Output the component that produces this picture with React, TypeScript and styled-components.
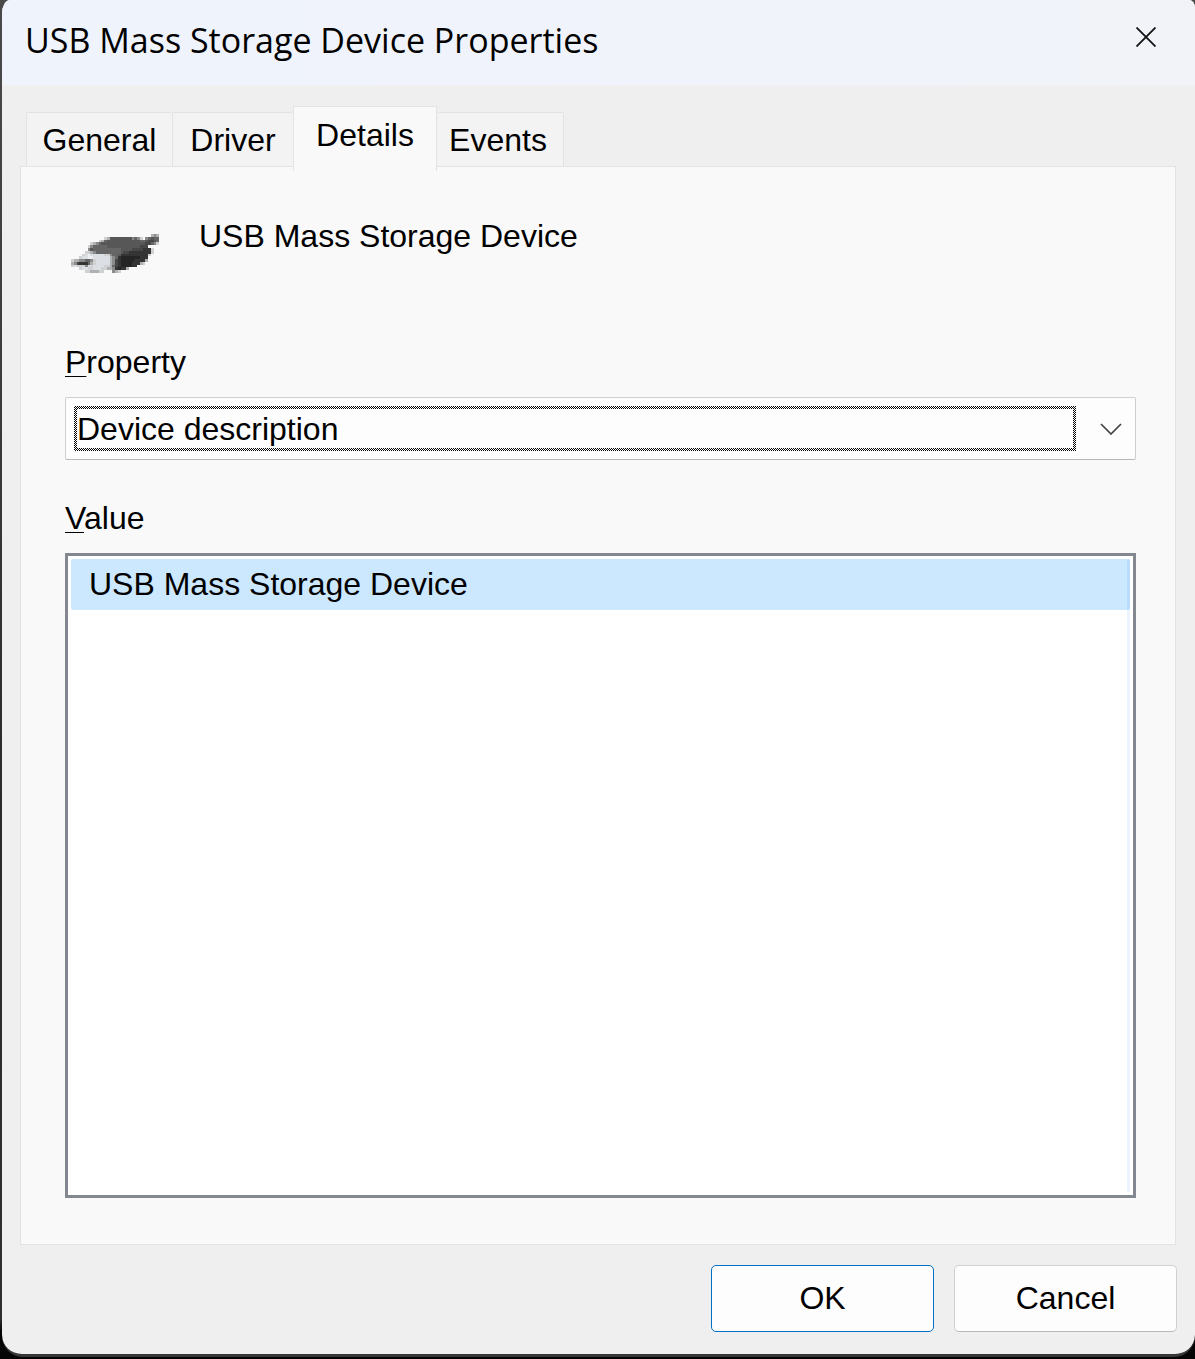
import React from "react";
import styled, { createGlobalStyle } from "styled-components";

const GlobalStyle = createGlobalStyle`
  *, *::before, *::after { box-sizing: border-box; }
  body {
    margin: 0;
    background: #0c0c0c;
    color: #000;
    font-family: "Liberation Sans", Arial, sans-serif;
    font-size: 32px;
    line-height: 40px;
  }
  button, select { font: inherit; color: inherit; }
`;

const Desktop = styled.div`
  display: flex;
  min-height: 100vh;
  padding: 0 0 2px 2px;
  background: linear-gradient(#4a4a4a, #2a2a2a 60%, #303030 97%, #050505 98%);
`;

const Dialog = styled.main`
  flex: 1;
  min-width: 0;
  display: flex;
  flex-direction: column;
  background: #efefef;
  border-bottom: 3px solid #363838;
  border-radius: 8px 6px 20px 20px / 14px 8px 22px 22px;
  overflow: hidden;
`;

const TitleBar = styled.header`
  display: flex;
  justify-content: space-between;
  align-items: flex-start;
  height: 85px;
  padding: 16px 24px 0 23px;
  background: linear-gradient(90deg, #eff3fc, #f1f3f9);
`;

const Title = styled.h1`
  margin: 0;
  font-family: "Open Sans", "Noto Sans", sans-serif;
  font-size: 34px;
  line-height: 48px;
  font-weight: 400;
  white-space: nowrap;
`;

const CloseButton = styled.button`
  display: grid;
  place-items: center;
  width: 50px;
  height: 42px;
  padding: 0;
  border: 0;
  background: transparent;
`;

const Content = styled.div`
  flex: 1;
  display: flex;
  flex-direction: column;
  padding: 21px 18px 22px;
`;

const TabList = styled.div`
  display: flex;
  align-items: flex-end;
  height: 60px;
  padding-left: 6px;
`;

const Tab = styled.button<{ $active?: boolean; $width: number }>`
  flex: none;
  width: ${(p) => p.$width}px;
  height: ${(p) => (p.$active ? 65 : 54)}px;
  margin-bottom: ${(p) => (p.$active ? -5 : 0)}px;
  padding: ${(p) => (p.$active ? "0 0 9px" : "0")};
  border: 1px solid #e3e3e3;
  border-right-width: ${(p) => (p.$active ? 1 : 0)}px;
  border-bottom: 0;
  border-radius: 2px 2px 0 0;
  background: ${(p) => (p.$active ? "#f9f9f9" : "#f3f3f3")};
  position: relative;
  z-index: ${(p) => (p.$active ? 1 : 0)};
  text-align: center;

  &:last-child {
    padding-right: 4px;
    border-right-width: 1px;
    border-left-width: 0;
  }
`;

const Panel = styled.section`
  flex: 1;
  display: flex;
  flex-direction: column;
  margin-right: 1px;
  padding: 49px 39px 46px 44px;
  border: 1px solid #e3e3e3;
  background: #f9f9f9;
`;

const DeviceHeader = styled.div`
  display: flex;
  align-items: flex-start;
  gap: 40px;
  height: 126px;
  padding-left: 6px;
`;

const DeviceIcon = styled.svg`
  flex: none;
  width: 88px;
  height: 39px;
  margin-top: 18px;
`;

const DeviceName = styled.div`
  white-space: nowrap;
`;

const Label = styled.label`
  display: block;
  u {
    text-decoration-thickness: 1px;
    text-underline-offset: 3px;
    text-decoration-skip-ink: none;
  }
`;

const Combo = styled.div`
  display: flex;
  align-items: center;
  height: 63px;
  margin: 15px 0 38px;
  padding: 0 13px 0 8px;
  border: 1px solid #cfcfcf;
  border-bottom-color: #b8b8b8;
  border-radius: 2px;
  background: #fdfdfd;
`;

const FocusRing = styled.div`
  flex: 1;
  display: flex;
  height: 45px;
  margin-right: 24px;
  padding: 3px;
  background: repeating-conic-gradient(#000 0 25%, #fff 0 50%) 0 0 / 2px 2px;
`;

const PropertySelect = styled.select`
  flex: 1;
  appearance: none;
  height: 39px;
  padding: 0 0 2px;
  border: 0;
  outline: 0;
  border-radius: 0;
  background: #fdfdfd;
`;

const ValueList = styled.ul`
  flex: 1;
  margin: 15px 0 0;
  padding: 3px;
  border: 3px solid #828790;
  background: linear-gradient(#ecf4ff, #ecf4ff) right 3px top 3px / 3px calc(100% - 6px) no-repeat #fff;
  list-style: none;
`;

const ValueItem = styled.li`
  height: 51px;
  padding: 5px 18px;
  border-right: 3px solid #b9dcff;
  border-radius: 2px;
  background: #cce8ff;
`;

const Actions = styled.footer`
  display: flex;
  justify-content: flex-end;
  gap: 20px;
  padding-top: 20px;
`;

const ActionButton = styled.button<{ $primary?: boolean }>`
  width: 223px;
  height: 67px;
  padding: 0 0 2px;
  border: 1px solid ${(p) => (p.$primary ? "#0070c4" : "#d0d0d0")};
  border-bottom-color: ${(p) => (p.$primary ? "#0070c4" : "#b9b9b9")};
  border-radius: 5px;
  background: #fdfdfd;
`;

// 32-column pixel icon; each digit is a shade, each dot is transparent.
const plugRows = [
  ".............................767",
  "............87444444446568.65455",
  "..........8754444444444445543345",
  ".......8765444444444444444433568",
  "......8655555444444444444333....",
  "......645555555555444433332228..",
  ".....8876555555555433222222228..",
  "....8909999988655422222222228...",
  "...8990099999976521111111222....",
  "8776655689999976321111122227....",
  "763222578999997632111122278.....",
  "898886989999887532111122........",
  "...899889998877621227...........",
  ".....8877788...678..............",
];

const shades: Record<string, string> = {
  "0": "#eceef1",
  "1": "#252525",
  "2": "#343434",
  "3": "#474747",
  "4": "#575757",
  "5": "#666666",
  "6": "#8a8a8a",
  "7": "#aeb0b2",
  "8": "#cfd1d3",
  "9": "#dcdfe4",
};

const UsbPlug = () => (
  <DeviceIcon viewBox="0 0 32 14" preserveAspectRatio="none" shapeRendering="crispEdges" aria-hidden="true">
    {plugRows.flatMap((row, y) =>
      [...row].map((c, x) =>
        shades[c] ? <rect key={`${x}-${y}`} x={x} y={y} width="1" height="1" fill={shades[c]} /> : null
      )
    )}
  </DeviceIcon>
);

export default function App() {
  return (
    <>
      <GlobalStyle />
      <Desktop>
        <Dialog>
          <TitleBar>
            <Title>USB Mass Storage Device Properties</Title>
            <CloseButton aria-label="Close">
              <svg width="20" height="20" viewBox="0 0 20 20" fill="none" stroke="#111" strokeWidth="1.8">
                <path d="M.5.5l19 19M19.5.5l-19 19" />
              </svg>
            </CloseButton>
          </TitleBar>
          <Content>
            <TabList role="tablist">
              <Tab role="tab" $width={146}>General</Tab>
              <Tab role="tab" $width={121}>Driver</Tab>
              <Tab role="tab" $width={144} $active aria-selected="true">Details</Tab>
              <Tab role="tab" $width={127}>Events</Tab>
            </TabList>
            <Panel role="tabpanel">
              <DeviceHeader>
                <UsbPlug />
                <DeviceName>USB Mass Storage Device</DeviceName>
              </DeviceHeader>
              <Label htmlFor="property"><u>P</u>roperty</Label>
              <Combo>
                <FocusRing>
                  <PropertySelect id="property">
                    <option>Device description</option>
                  </PropertySelect>
                </FocusRing>
                <svg width="22" height="12" viewBox="0 0 22 12" fill="none" stroke="#444" strokeWidth="1.7">
                  <path d="M1 1l10 10L21 1" />
                </svg>
              </Combo>
              <Label as="div" id="value-label"><u>V</u>alue</Label>
              <ValueList role="listbox" aria-labelledby="value-label">
                <ValueItem role="option" aria-selected="true">USB Mass Storage Device</ValueItem>
              </ValueList>
            </Panel>
            <Actions>
              <ActionButton $primary>OK</ActionButton>
              <ActionButton>Cancel</ActionButton>
            </Actions>
          </Content>
        </Dialog>
      </Desktop>
    </>
  );
}
